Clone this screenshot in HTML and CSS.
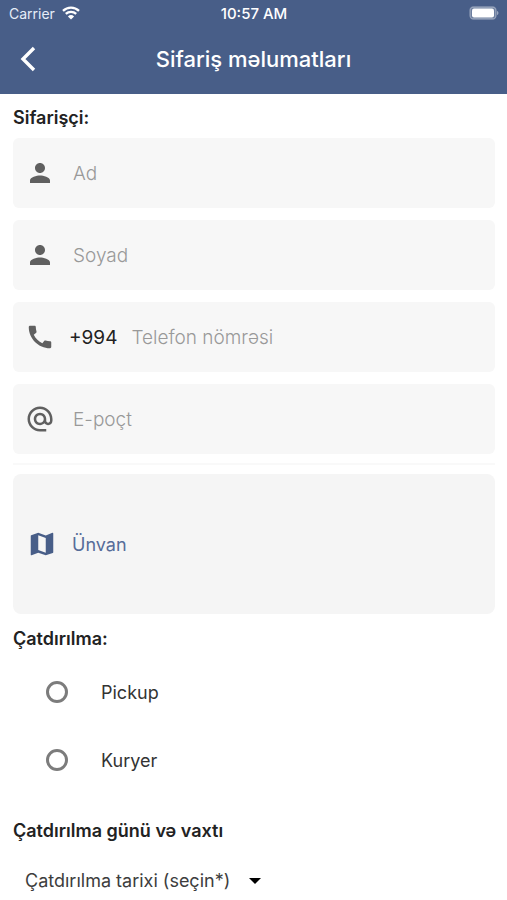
FILE: index.html
```html
<!DOCTYPE html>
<html lang="az">
<head>
<meta charset="utf-8">
<meta name="viewport" content="width=device-width, initial-scale=1">
<title>Sifariş məlumatları</title>
<link rel="stylesheet" href="styles.css">
</head>
<body>
<header class="top">
  <div class="status">
    <div class="carrier">
      <span>Carrier</span>
      <svg class="wifi" viewBox="0 0 18 14" aria-hidden="true">
        <path d="M1 4.9a11.6 11.6 0 0 1 16 0M3.8 7.9a7.6 7.6 0 0 1 10.4 0" fill="none" stroke="currentColor" stroke-width="2.3"/>
        <path d="M9 13.6 5.9 10.4a4.5 4.5 0 0 1 6.2 0z" fill="currentColor"/>
      </svg>
    </div>
    <time class="clock">10:57 AM</time>
    <svg class="battery" viewBox="0 0 30 14" aria-hidden="true">
      <rect x="1" y="1" width="26" height="12" rx="3.500" fill="#fff" fill-opacity=".2" stroke="#fff" stroke-opacity=".35" stroke-width="1.300"/>
      <rect x="3" y="2.500" width="22" height="9" rx="2" fill="#fff"/>
      <path d="M28 5v4c1.900-.5 1.900-3.500 0-4z" fill="#fff" fill-opacity=".45"/>
    </svg>
  </div>
  <div class="bar">
    <button class="back" type="button" aria-label="Geri">
      <svg viewBox="0 0 16 26" aria-hidden="true"><path d="M14 2 3 13l11 11" fill="none" stroke="currentColor" stroke-width="3.400"/></svg>
    </button>
    <h1 class="title">Sifariş məlumatları</h1>
  </div>
</header>

<main>
  <form class="order">
    <h2 class="heading">Sifarişçi:</h2>
    <div class="fields">
      <label class="field">
        <svg class="icon" viewBox="0 0 24 24" aria-hidden="true"><path d="M12 12c2.210 0 4-1.790 4-4s-1.790-4-4-4-4 1.790-4 4 1.790 4 4 4zm0 2c-2.670 0-8 1.340-8 4v2h16v-2c0-2.660-5.330-4-8-4z"/></svg>
        <input class="input" type="text" placeholder="Ad" aria-label="Ad">
      </label>
      <label class="field">
        <svg class="icon" viewBox="0 0 24 24" aria-hidden="true"><path d="M12 12c2.210 0 4-1.790 4-4s-1.790-4-4-4-4 1.790-4 4 1.790 4 4 4zm0 2c-2.670 0-8 1.340-8 4v2h16v-2c0-2.660-5.330-4-8-4z"/></svg>
        <input class="input" type="text" placeholder="Soyad" aria-label="Soyad">
      </label>
      <label class="field field-phone">
        <svg class="icon" viewBox="0 0 24 24" aria-hidden="true"><path d="M20.010 15.380c-1.230 0-2.420-.2-3.530-.56-.35-.12-.74-.03-1.010.24l-1.570 1.970c-2.830-1.350-5.480-3.900-6.890-6.830l1.950-1.660c.27-.28.35-.67.24-1.020-.37-1.110-.56-2.300-.56-3.530 0-.54-.45-.99-.99-.99H4.190C3.650 3 3 3.240 3 3.990 3 13.280 10.730 21 20.010 21c.71 0 .99-.63.99-1.180v-3.450c0-.54-.45-.99-.99-.99z"/></svg>
        <span class="prefix">+994</span>
        <input class="input" type="tel" placeholder="Telefon nömrəsi" aria-label="Telefon nömrəsi">
      </label>
      <label class="field">
        <svg class="icon" viewBox="0 0 24 24" aria-hidden="true"><path d="M12 1.950c-5.520 0-10 4.480-10 10s4.480 10 10 10h5v-2h-5c-4.340 0-8-3.660-8-8s3.660-8 8-8 8 3.660 8 8v1.430c0 .79-.71 1.570-1.500 1.570s-1.500-.78-1.500-1.570v-1.430c0-2.760-2.240-5-5-5s-5 2.240-5 5 2.240 5 5 5c1.380 0 2.640-.56 3.540-1.470.65.89 1.770 1.470 2.960 1.470 1.970 0 3.500-1.600 3.500-3.570v-1.430c0-5.520-4.480-10-10-10zm0 13c-1.660 0-3-1.340-3-3s1.340-3 3-3 3 1.340 3 3-1.340 3-3 3z"/></svg>
        <input class="input" type="email" placeholder="E-poçt" aria-label="E-poçt">
      </label>
    </div>
    <hr class="rule">
    <button class="address" type="button">
      <svg class="icon" viewBox="0 0 24 24" aria-hidden="true"><path d="M20.500 3l-.16.030L15 5.100 9 3 3.360 4.900c-.21.070-.36.250-.36.480V20.500c0 .28.220.5.500.5l.16-.030L9 18.900l6 2.100 5.640-1.900c.21-.070.36-.250.36-.480V3.500c0-.28-.22-.5-.5-.5zM15 19l-6-2.110V5l6 2.110V19z"/></svg>
      <span>Ünvan</span>
    </button>

    <h2 class="heading heading-delivery">Çatdırılma:</h2>
    <div class="options">
      <label class="option"><input class="radio" type="radio" name="delivery" value="pickup">Pickup</label>
      <label class="option"><input class="radio" type="radio" name="delivery" value="courier">Kuryer</label>
    </div>

    <h2 class="heading heading-date">Çatdırılma günü və vaxtı</h2>
    <div class="date">
      <select class="select" aria-label="Çatdırılma tarixi">
        <option>Çatdırılma tarixi (seçin*)</option>
      </select>
      <svg class="caret" viewBox="0 0 12 6" aria-hidden="true"><path d="M0 0h12L6 6z"/></svg>
    </div>
  </form>
</main>
</body>
</html>
```

FILE: styles.css
```css
* {
  box-sizing: border-box;
}

body {
  margin: 0;
  background: #fff;
  color: #222;
  font-family: Inter, "Liberation Sans", sans-serif;
  font-size: 18px;
}

button,
input,
select {
  font: inherit;
  color: inherit;
}

.top {
  background: #485e88;
  color: #fff;
}

.status {
  display: grid;
  grid-template-columns: 1fr auto 1fr;
  align-items: center;
  height: 26px;
  padding: 0 8px 0 9px;
  font-size: 14px;
}

.carrier {
  display: flex;
  align-items: center;
  gap: 7px;
  color: #e6edf8;
}

.wifi {
  width: 18px;
  height: 14px;
  color: #fff;
}

.clock {
  font-size: 15px;
  font-weight: 500;
}

.battery {
  width: 30px;
  height: 14px;
  justify-self: end;
}

.bar {
  display: grid;
  grid-template-columns: 56px 1fr 56px;
  align-items: center;
  height: 68px;
  padding-bottom: 2px;
}

.back {
  display: flex;
  justify-content: center;
  padding: 8px;
  border: 0;
  background: none;
}

.back svg {
  width: 16px;
  height: 26px;
}

.title {
  margin: 0;
  font-size: 22px;
  font-weight: 500;
  text-align: center;
}

.order {
  padding: 12px 12px 8px 13px;
}

.heading {
  margin: 0;
  font-size: 18px;
  font-weight: 600;
  line-height: 24px;
}

.fields {
  display: grid;
  gap: 12px;
  margin-top: 8px;
}

.field {
  display: flex;
  align-items: center;
  gap: 18px;
  height: 70px;
  padding: 0 12px;
  border-radius: 6px;
  background: #f7f7f7;
}

.field-phone {
  gap: 14px;
}

.icon {
  flex: none;
  width: 30px;
  height: 30px;
  fill: #606060;
}

.prefix {
  font-size: 19px;
}

.input {
  flex: 1;
  min-width: 0;
  padding: 0;
  border: 0;
  outline: 0;
  background: none;
  font-size: 19px;
}

.input::placeholder {
  color: #999;
  font-weight: 300;
  opacity: 1;
}

.rule {
  height: 2px;
  margin: 9px 0;
  border: 0;
  background: #f9f9f9;
}

.address {
  display: flex;
  align-items: center;
  gap: 15px;
  width: 100%;
  height: 140px;
  padding: 0 14px;
  border: 0;
  border-radius: 8px;
  background: #f5f5f5;
  color: #566c99;
  font-size: 18px;
}

.address .icon {
  fill: #485e88;
}

.heading-delivery {
  margin-top: 13px;
}

.options {
  margin-top: 7px;
}

.option {
  display: flex;
  align-items: center;
  gap: 33px;
  height: 68px;
  padding-left: 33px;
  color: #333;
}

.radio {
  appearance: none;
  width: 22px;
  height: 22px;
  margin: 0;
  border: 3px solid #7c7c7c;
  border-radius: 50%;
}

.radio:checked {
  background: #485e88;
  box-shadow: inset 0 0 0 3px #fff;
}

.heading-date {
  margin-top: 25px;
}

.date {
  display: flex;
  align-items: center;
  gap: 18px;
  margin-top: 24px;
  padding-left: 12px;
}

.select {
  appearance: none;
  padding: 0;
  border: 0;
  background: none;
  color: #3d3d3d;
  line-height: 28px;
}

.caret {
  width: 12px;
  height: 6px;
}
```
